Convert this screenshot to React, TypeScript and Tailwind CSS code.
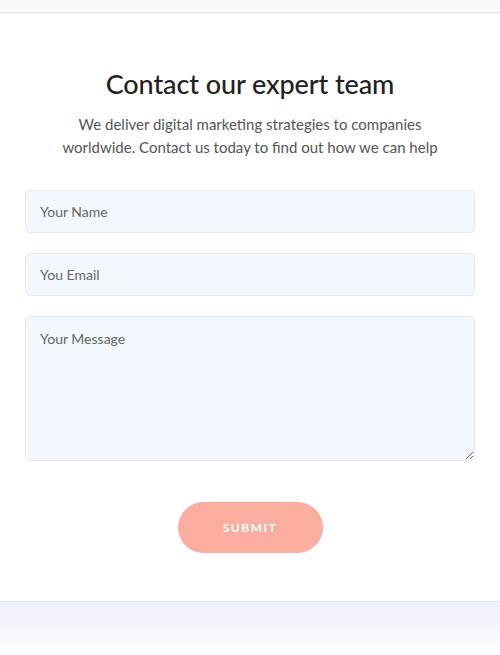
export default function App() {
  return (
    <div className="flex h-[655px] w-[500px] flex-col overflow-hidden bg-white font-['Lato',sans-serif]">
      <div className="h-[13px] shrink-0 border-b border-[#e3e3ee] bg-[#fafafa]" />
      <section className="flex h-[588px] shrink-0 flex-col items-center bg-white px-[25px] pt-[53px]">
        <h2 className="text-[27px] font-medium leading-[36px] tracking-[-0.1px] text-[#222]">
          Contact our expert team
        </h2>
        <p className="mt-[11px] text-center text-[15px] leading-[23px] text-[#555]">
          We deliver digital marketing strategies to companies
          <br />
          worldwide. Contact us today to find out how we can help
        </p>
        <form className="mt-[31px] flex w-full flex-col gap-[20px]" onSubmit={(e) => e.preventDefault()}>
          <input
            type="text"
            placeholder="Your Name"
            className="h-[43px] w-full rounded-[5px] border border-[#e5e9f0] bg-[#f3f8fe] px-[14px] text-[14px] text-[#333] placeholder:text-[#666] outline-none"
          />
          <input
            type="email"
            placeholder="You Email"
            className="h-[43px] w-full rounded-[5px] border border-[#e5e9f0] bg-[#f3f8fe] px-[14px] text-[14px] text-[#333] placeholder:text-[#666] outline-none"
          />
          <textarea
            placeholder="Your Message"
            className="h-[145px] w-full rounded-[5px] border border-[#e5e9f0] bg-[#f3f8fe] px-[14px] py-[11px] text-[14px] text-[#333] placeholder:text-[#666] outline-none"
          />
          <div className="mt-[21px] flex justify-center">
            <button
              type="submit"
              className="h-[51px] w-[145px] rounded-full bg-[#fbaea0] text-[12px] font-bold tracking-[1.5px] text-white"
            >
              SUBMIT
            </button>
          </div>
        </form>
      </section>
      <div className="flex-1 border-t border-[#e3e5ef] bg-gradient-to-b from-[#eef0fa] to-white" />
    </div>
  );
}
